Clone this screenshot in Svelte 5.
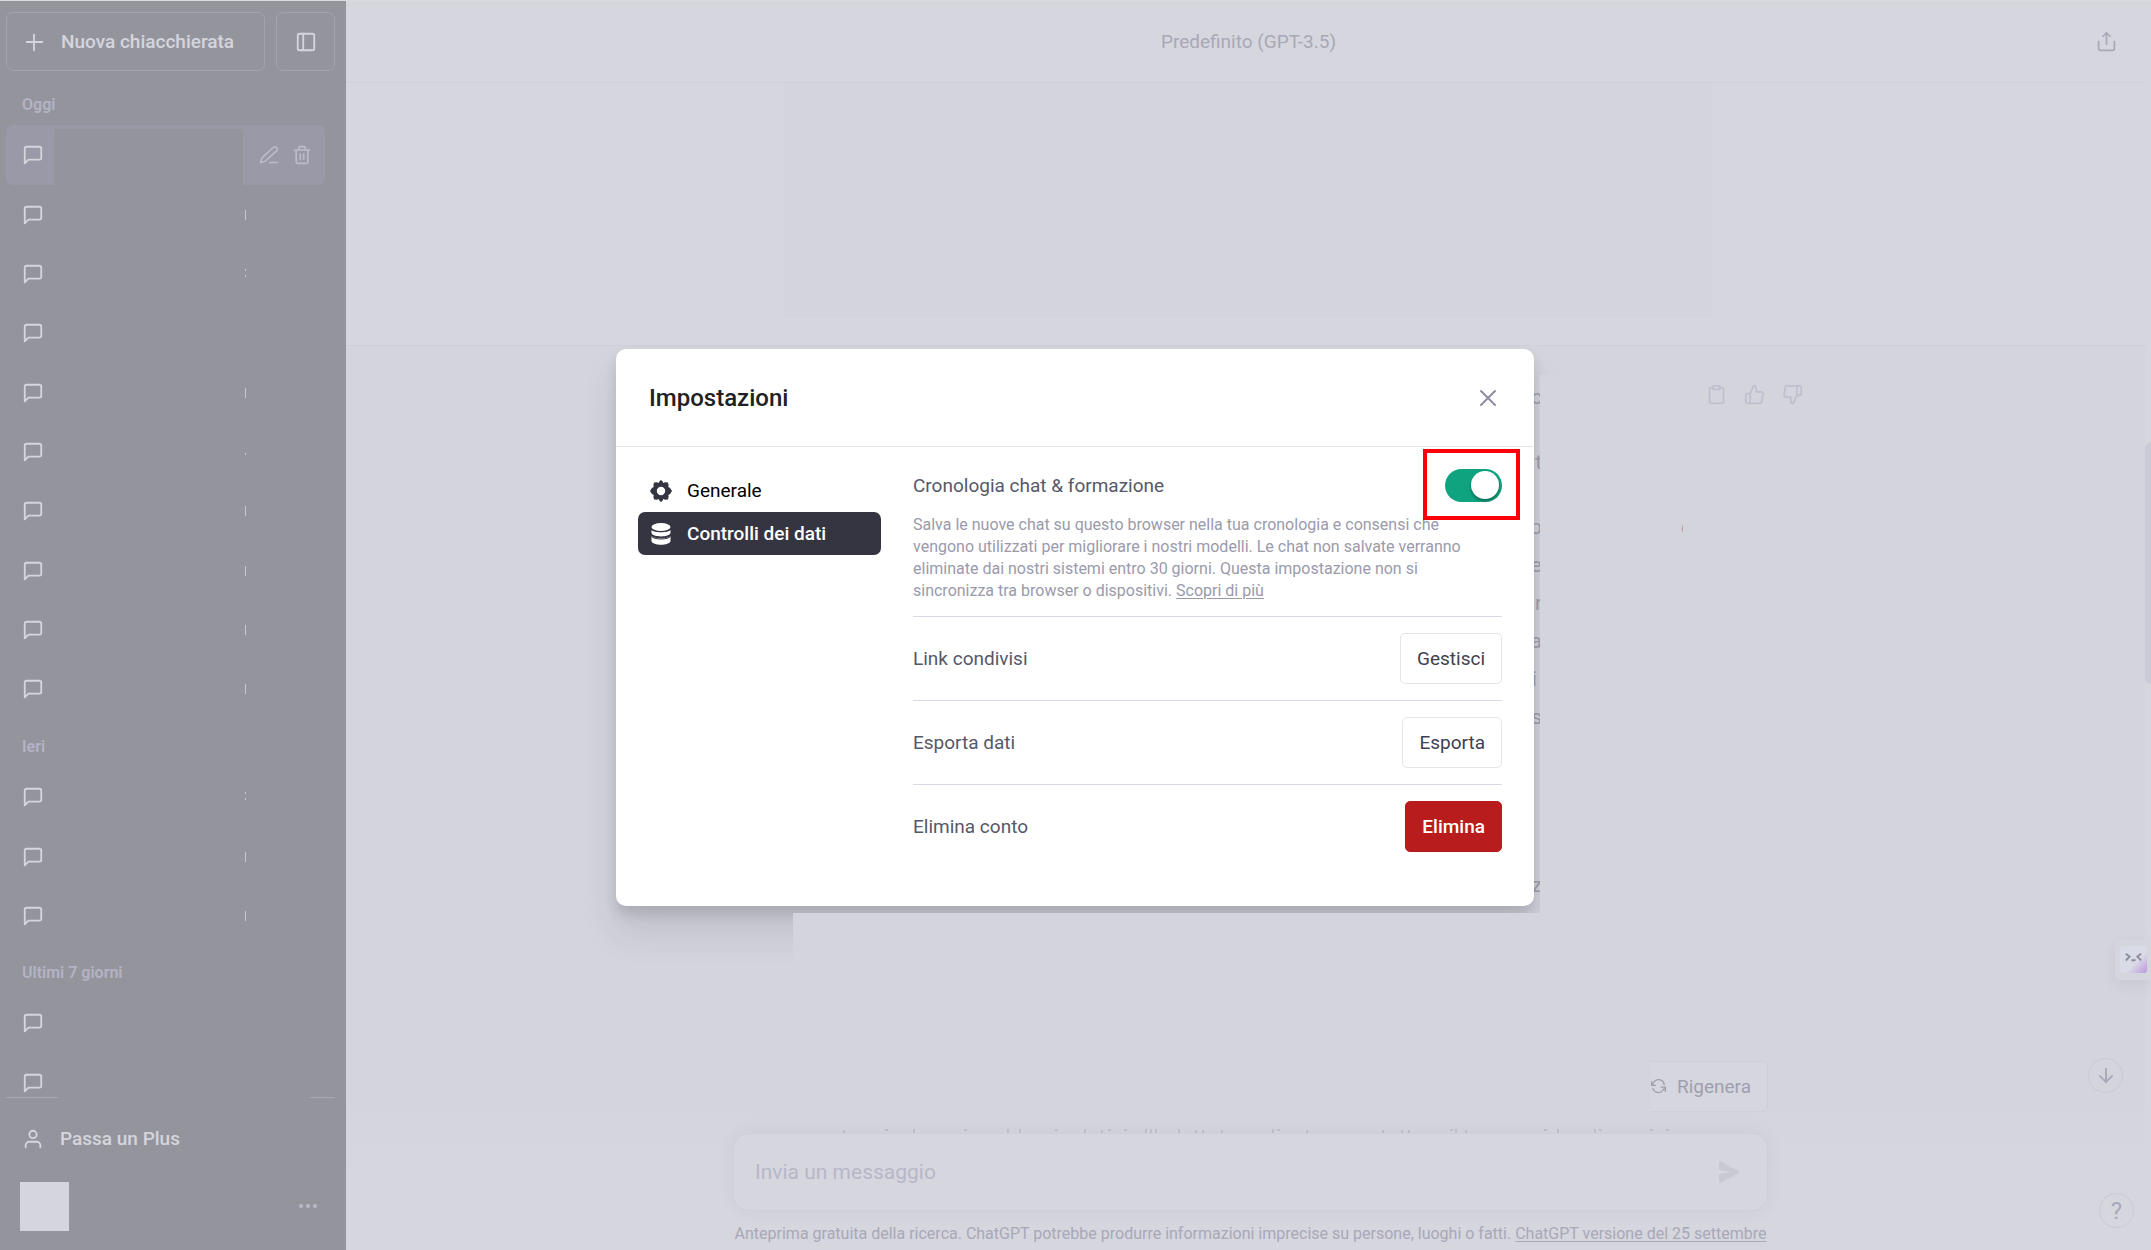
<script lang="ts">
  interface ChatGroup {
    label: string;
    // what is left visible of each title: nothing, a stem or a few dots
    chats: string[];
  }

  const groups: ChatGroup[] = [
    {
      label: 'Oggi',
      chats: ['none', 'stem', 'dots', 'none', 'stem', 'dot', 'stem', 'stem', 'stem', 'stem'],
    },
    { label: 'Ieri', chats: ['dots', 'stem', 'stem'] },
    { label: 'Ultimi 7 giorni', chats: ['none', 'none'] },
  ];

  const paragraphs = [['c'], ['at'], ['p', 'e', 'r', 'ia', 'i ', 's'], ['', ''], ['z']];

  // tops of the letters that show above the message box
  const stems = [180, 274, 286, 351, 412, 417, 422, 445, 539, 722, 824, 861];
  const dots = [152, 231, 322, 375, 391, 544, 717, 811, 866, 917, 933];
  const bars = [110, 368, 462, 469, 488, 573, 649, 668, 675, 732];

  let training = $state(true);
  let message = $state('');
</script>

{#snippet bubble()}
  <svg class="icon" viewBox="0 0 24 24" aria-hidden="true">
    <path d="M21 15a2 2 0 0 1-2 2H7l-4 4V5a2 2 0 0 1 2-2h14a2 2 0 0 1 2 2z" />
  </svg>
{/snippet}

<div class="app">
  <aside class="sidebar">
    <div class="top-buttons">
      <button class="new-chat">
        <svg class="icon" viewBox="0 0 24 24" aria-hidden="true"><path d="M12 4v17M4 12h17" /></svg>
        Nuova chiacchierata
      </button>
      <button class="collapse" aria-label="Nascondi barra laterale">
        <svg class="icon" viewBox="0 0 24 24" aria-hidden="true">
          <rect x="3" y="3" width="18" height="18" rx="2" /><path d="M9 3v18" />
        </svg>
      </button>
    </div>

    <nav class="history" aria-label="Cronologia chat">
      {#each groups as group, g}
        <h3>{group.label}</h3>
        <ul>
          {#each group.chats as cut, i}
            <li class:active={g === 0 && i === 0}>
              {@render bubble()}
              <span class="title"></span>
              <span class="cut {cut}"></span>
              {#if g === 0 && i === 0}
                <button class="tool" aria-label="Rinomina">
                  <svg class="icon" viewBox="0 0 24 24" aria-hidden="true">
                    <path d="M13 21h9M17 3a2.800 2.800 0 0 1 4 4L7.500 19.500 2 21l1.500-5.500z" />
                  </svg>
                </button>
                <button class="tool" aria-label="Elimina chat">
                  <svg class="icon" viewBox="0 0 24 24" aria-hidden="true">
                    <path d="M3 6h18M19 6v14a2 2 0 0 1-2 2H7a2 2 0 0 1-2-2V6M8 6V4a2 2 0 0 1 2-2h4a2 2 0 0 1 2 2v2M10 11v6M14 11v6" />
                  </svg>
                </button>
              {/if}
            </li>
          {/each}
        </ul>
      {/each}
    </nav>

    <div class="account">
      <div class="rule"><span></span><span></span></div>
      <button class="upgrade">
        <svg class="icon" viewBox="0 0 24 24" aria-hidden="true">
          <circle cx="12" cy="7" r="4" /><path d="M20 21v-2a4 4 0 0 0-4-4H8a4 4 0 0 0-4 4v2" />
        </svg>
        Passa un Plus
      </button>
      <button class="profile" aria-label="Profilo">
        <span class="avatar"></span>
        <svg class="more" viewBox="0 0 18 4" aria-hidden="true">
          <circle cx="2" cy="2" r="2" /><circle cx="9" cy="2" r="2" /><circle cx="16" cy="2" r="2" />
        </svg>
      </button>
    </div>
  </aside>

  <main>
    <header class="chat-header">
      <span>Predefinito (GPT-3.5)</span>
      <button class="share" aria-label="Condividi">
        <svg class="icon" viewBox="0 0 24 24" aria-hidden="true">
          <path d="M12 15V2M8 6l4-4 4 4M3 12v8a2 2 0 0 0 2 2h14a2 2 0 0 0 2-2v-8" />
        </svg>
      </button>
    </header>

    <section class="conversation">
      <article class="question"><div class="hidden-text"></div></article>
      <article class="answer">
        <div class="answer-inner">
          <div class="answer-text">
            {#each paragraphs as lines}
              <p>
                {#each lines as line}<span>{line}</span>{/each}
              </p>
            {/each}
          </div>
          <span class="stray">e</span>
          <div class="actions">
            <button aria-label="Copia">
              <svg class="icon" viewBox="0 0 24 24" aria-hidden="true">
                <path d="M16 4h2a2 2 0 0 1 2 2v14a2 2 0 0 1-2 2H6a2 2 0 0 1-2-2V6a2 2 0 0 1 2-2h2" />
                <rect x="8" y="2" width="8" height="4" rx="1" />
              </svg>
            </button>
            <button aria-label="Buona risposta">
              <svg class="icon" viewBox="0 0 24 24" aria-hidden="true">
                <path d="M14 9V5a3 3 0 0 0-3-3l-4 9v11h11.280a2 2 0 0 0 2-1.700l1.380-9a2 2 0 0 0-2-2.300zM7 22H4a2 2 0 0 1-2-2v-7a2 2 0 0 1 2-2h3" />
              </svg>
            </button>
            <button aria-label="Risposta non valida">
              <svg class="icon" viewBox="0 0 24 24" aria-hidden="true">
                <path d="M10 15v4a3 3 0 0 0 3 3l4-9V2H5.720a2 2 0 0 0-2 1.700l-1.380 9a2 2 0 0 0 2 2.300zM17 2h2.670A2.310 2.310 0 0 1 22 4v7a2.310 2.310 0 0 1-2.330 2H17" />
              </svg>
            </button>
          </div>
        </div>
      </article>
    </section>

    <footer class="composer">
      <div class="regenerate">
        <button>
          <svg class="icon" viewBox="0 0 24 24" aria-hidden="true">
            <path d="M23 20v-7h-7M1 4v6h6M21 9A9 9 0 0 0 4 6l-3 4M23 13l-4 5A9 9 0 0 1 3 15" />
          </svg>
          Rigenera
        </button>
      </div>
      <svg class="letter-tops" viewBox="0 0 1035 4" preserveAspectRatio="xMinYMin" aria-hidden="true">
        {#each stems as x}<rect {x} y="0" width="2" height="4" />{/each}
        {#each dots as x}<rect {x} y="0" width="3" height="2" />{/each}
        {#each bars as x}<rect {x} y="1" width="2" height="3" />{/each}
      </svg>
      <form onsubmit={(e) => e.preventDefault()}>
        <input aria-label="Messaggio" placeholder="Invia un messaggio" bind:value={message} />
        <button class="send" aria-label="Invia">
          <svg viewBox="0 0 20 22" aria-hidden="true">
            <path d="M0 1.500C0 .4 1 0 2 .4l17 9.300c1.300.700 1.300 2 0 2.700L2 21.600c-1 .5-2 0-2-1.100v-6.300c0-.7.4-1.200 1.100-1.300L11 11 1.100 9.100C.4 9 0 8.500 0 7.800z" />
          </svg>
        </button>
      </form>
      <p class="note">
        Anteprima gratuita della ricerca. ChatGPT potrebbe produrre informazioni imprecise su persone, luoghi o fatti.
        <a href="#notes">ChatGPT versione del 25 settembre</a>
      </p>
    </footer>

    <button class="round scroll-down" aria-label="Vai in fondo">
      <svg class="icon" viewBox="0 0 24 24" aria-hidden="true"><path d="M12 2v20M3 13l9 9 9-9" /></svg>
    </button>
    <button class="round help">?</button>
    <div class="scroll-thumb"></div>
    <div class="extension">
      <svg viewBox="0 0 28 28" aria-hidden="true">
        <defs>
          <linearGradient id="tile" x1="0" y1="0" x2="1" y2="1">
            <stop offset="0.6" stop-color="#d9dbe6" />
            <stop offset="1" stop-color="#bd96dd" />
          </linearGradient>
        </defs>
        <rect width="28" height="28" rx="3" fill="url(#tile)" />
        <path d="M6 8l4 3-4 4M22 8l-4 3 4 4M12 14q2 2 4 0" fill="none" stroke="#8f8f9e" stroke-width="2" />
      </svg>
    </div>
  </main>

  <div class="overlay">
    <div class="modal-wrap">
      <div class="modal" role="dialog" aria-modal="true" aria-labelledby="settings-title">
        <div class="modal-header">
          <h2 id="settings-title">Impostazioni</h2>
          <button class="close" aria-label="Chiudi">
            <svg class="icon" viewBox="0 0 24 24" aria-hidden="true"><path d="M5 5l14 14M19 5L5 19" /></svg>
          </button>
        </div>
        <div class="modal-body">
          <div class="tabs" role="tablist">
            <button role="tab" aria-selected="false">
              <svg viewBox="0 0 22 22" aria-hidden="true">
                <path
                  fill-rule="evenodd"
                  d="M9.500 1.200 11 0l1.500 1.200.8 1.700 1.800-.7 2.900.2.600 2.800-.3 1.700 1.800 1L22 11l-1.900 3.100-1.800 1 .3 1.700-.6 2.800-2.900.2-1.800-.7-.8 1.700L11 22l-1.500-1.200-.8-1.700-1.800.7-2.900-.2-.6-2.800.3-1.700-1.800-1L0 11l1.900-3.100 1.800-1-.3-1.700.6-2.800 2.900-.2 1.800.7zM11 6.800a4.200 4.200 0 1 0 0 8.400 4.200 4.200 0 0 0 0-8.400z"
                />
              </svg>
              Generale
            </button>
            <button class="selected" role="tab" aria-selected="true">
              <svg viewBox="0 0 22 22" aria-hidden="true">
                <ellipse cx="11" cy="4" rx="9.500" ry="4" />
                <path d="M1.500 7c2 3 17 3 19 0v3c-1 4.500-18 4.500-19 0zM1.500 13c2 3 17 3 19 0v5c-1 5-18 5-19 0z" />
                <path class="gap" d="M1.500 13.300c2 3.600 17 3.600 19 0" />
              </svg>
              Controlli dei dati
            </button>
          </div>

          <div class="panel">
            <div class="training">
              <div class="training-row">
                <label for="training">Cronologia chat &amp; formazione</label>
                <span class="switch">
                  <input id="training" type="checkbox" role="switch" bind:checked={training} />
                  <span class="highlight"></span>
                </span>
              </div>
              <p>
                Salva le nuove chat su questo browser nella tua cronologia e consensi che vengono utilizzati per
                migliorare i nostri modelli. Le chat non salvate verranno eliminate dai nostri sistemi entro 30
                giorni. Questa impostazione non si sincronizza tra browser o dispositivi.
                <a href="#more">Scopri di più</a>
              </p>
            </div>
            <div class="setting">
              <span>Link condivisi</span>
              <button>Gestisci</button>
            </div>
            <div class="setting">
              <span>Esporta dati</span>
              <button>Esporta</button>
            </div>
            <div class="setting">
              <span>Elimina conto</span>
              <button class="danger">Elimina</button>
            </div>
          </div>
        </div>
      </div>
      <div class="cover cover-right"></div>
      <div class="cover cover-bottom"></div>
    </div>
  </div>
</div>

<style>
  :global(body) {
    margin: 0;
  }

  .app {
    position: relative;
    display: flex;
    height: 100vh;
    box-sizing: border-box;
    border-top: 1px solid #dadadd;
    overflow: hidden;
    background: #d6d6df;
    font-family: Roboto, 'Liberation Sans', sans-serif;
    font-size: 19px;
    line-height: 32px;
    color: #565869;
  }

  button {
    display: flex;
    align-items: center;
    padding: 0;
    border: none;
    background: none;
    font: inherit;
    color: inherit;
    cursor: pointer;
  }

  h2,
  h3,
  p,
  ul {
    margin: 0;
    padding: 0;
  }

  .icon {
    flex: none;
    width: 21px;
    height: 21px;
    fill: none;
    stroke: currentColor;
    stroke-width: 2;
    stroke-linecap: round;
    stroke-linejoin: round;
  }

  /* sidebar */
  .sidebar {
    display: flex;
    flex-direction: column;
    flex: none;
    width: 346px;
    box-sizing: border-box;
    padding: 11px 11px 0 6px;
    background: #94949d;
    color: #d5d5de;
  }

  .sidebar .icon {
    width: 22px;
    height: 22px;
  }

  .top-buttons {
    display: flex;
    gap: 11px;
  }

  .new-chat,
  .collapse {
    height: 59px;
    box-sizing: border-box;
    border: 1px solid #a3a3ad;
    border-radius: 7px;
  }

  .new-chat {
    flex: 1;
    gap: 16px;
    padding-left: 16px;
    font-weight: 500;
  }

  .collapse {
    width: 59px;
    justify-content: center;
  }

  .history {
    flex: 1;
    min-height: 0;
    overflow: hidden;
    padding-top: 6px;
  }

  .history h3 {
    padding: 8px 16px 0;
    font-size: 16px;
    font-weight: 600;
    line-height: 40px;
    color: #b3b3c5;
  }

  .history ul {
    list-style: none;
  }

  .history li {
    display: flex;
    align-items: center;
    height: 59px;
    margin-right: 10px;
    padding-left: 16px;
    border-radius: 7px;
  }

  .history li:nth-child(3n + 1) {
    height: 60px;
  }

  .history .active {
    background: #9999a7;
  }

  .title {
    align-self: flex-end;
    width: 191px;
    height: 56px;
    margin-left: 10px;
    background: #94949d;
  }

  .cut {
    width: 1px;
    height: 10px;
    margin-right: 15px;
  }

  .stem {
    background: #c8c8d2;
  }

  .dots {
    background: repeating-linear-gradient(#c8c8d2 0 2px, transparent 2px 6px);
  }

  .dot {
    background: linear-gradient(transparent 6px, #c8c8d2 6px 8px, transparent 8px);
  }

  .tool {
    margin-right: 13px;
    color: #bcbcc9;
  }

  .tool .icon {
    width: 20px;
    height: 20px;
  }

  .rule {
    display: flex;
    justify-content: space-between;
  }

  .rule span {
    width: 25px;
    height: 1px;
    background: #a8a8b1;
  }

  .rule span:first-child {
    width: 52px;
  }

  .upgrade {
    gap: 16px;
    width: 100%;
    height: 82px;
    padding-left: 16px;
    font-weight: 500;
  }

  .profile {
    justify-content: space-between;
    width: 100%;
    height: 72px;
    padding: 0 18px 0 14px;
    margin-top: -10px;
    margin-bottom: 8px;
  }

  .avatar {
    width: 49px;
    height: 49px;
    background: #d5d5de;
  }

  .more {
    width: 18px;
    height: 4px;
    fill: #b9b9c8;
  }

  /* chat */
  main {
    position: relative;
    display: flex;
    flex-direction: column;
    flex: 1;
    min-width: 0;
  }

  .chat-header {
    position: relative;
    display: flex;
    align-items: center;
    justify-content: center;
    flex: none;
    height: 81px;
    margin-right: 6px;
    padding-left: 6px;
    border-bottom: 1px solid #cfcfd9;
    color: #a8a8b6;
  }

  .share {
    position: absolute;
    right: 28px;
  }

  .conversation {
    display: flex;
    flex-direction: column;
    flex: 1;
    min-height: 0;
    overflow: hidden;
    margin-right: 6px;
  }

  .question {
    padding: 0 0 27px 4px;
    border-bottom: 1px solid #cecfd8;
  }

  .hidden-text {
    width: 928px;
    height: 235px;
    margin: 0 auto;
    background: #d4d4dd;
  }

  .answer {
    flex: 1;
    background: #d4d4dd;
  }

  .answer-inner {
    display: flex;
    width: 1106px;
    margin: 0 auto;
    padding: 32px 1px 0 10px;
    color: #9f9fad;
  }

  .answer-text {
    width: 843px;
    overflow: hidden;
    font-size: 21px;
    line-height: 38px;
    text-align: right;
  }

  .answer-text p {
    margin: 0 -2px 27px 0;
  }

  .answer-text span {
    display: block;
    min-height: 38px;
    white-space: pre;
  }

  .stray {
    width: 2px;
    margin-left: 141px;
    margin-top: 130px;
    overflow: hidden;
    font-size: 21px;
    line-height: 38px;
    height: 38px;
  }

  .actions {
    display: flex;
    align-items: flex-start;
    gap: 17px;
    margin-left: auto;
    padding-top: 6px;
    color: #bfbfce;
  }

  .composer {
    display: flex;
    flex-direction: column;
    align-items: center;
    flex: none;
    padding-left: 10px;
    margin-right: 6px;
    background: linear-gradient(#d4d4dd 40px, #d6d6df 100px);
  }

  .regenerate {
    display: flex;
    justify-content: flex-end;
    width: 100%;
    max-width: 1035px;
  }

  .regenerate button {
    gap: 11px;
    height: 51px;
    box-sizing: border-box;
    padding-right: 16px;
    border: 1px solid #cfcfd9;
    border-left: none;
    border-radius: 0 5px 5px 0;
    background: #d6d6df;
    color: #9f9fac;
  }

  .regenerate .icon {
    width: 15px;
    height: 15px;
  }

  .letter-tops {
    width: 1035px;
    height: 4px;
    margin-top: 17px;
    fill: #c0c0cb;
  }

  form {
    display: flex;
    align-items: center;
    width: 100%;
    max-width: 1035px;
    height: 78px;
    box-sizing: border-box;
    padding: 0 28px 0 21px;
    border: 1px solid #cecfd8;
    border-radius: 16px;
    background: #d6d6df;
    box-shadow: 0 0 20px rgba(60, 60, 90, 0.05);
  }

  form input {
    flex: 1;
    padding: 0;
    border: none;
    outline: none;
    background: none;
    font: inherit;
    font-size: 21px;
    color: #8e8ea0;
  }

  form input::placeholder {
    color: #b7b7c7;
    opacity: 1;
  }

  .send svg {
    width: 20px;
    height: 22px;
    fill: #c9c9d4;
  }

  .note {
    padding: 12px 0 5px;
    font-size: 16px;
    line-height: 22px;
    color: #a8a8b7;
  }

  .note a,
  .training a {
    color: inherit;
    text-underline-offset: 2px;
  }

  .round {
    position: absolute;
    justify-content: center;
    width: 35px;
    height: 35px;
    box-sizing: border-box;
    border: 1px solid #cacad5;
    border-radius: 50%;
    color: #a9a9b9;
  }

  .scroll-down {
    right: 28px;
    bottom: 157px;
  }

  .scroll-down .icon {
    width: 16px;
    height: 17px;
    stroke-width: 3;
  }

  .help {
    right: 17px;
    bottom: 22px;
    font-size: 24px;
  }

  .scroll-thumb {
    position: absolute;
    top: 441px;
    right: 0;
    width: 6px;
    height: 242px;
    border-radius: 6px 0 0 6px;
    background: #cbcbd7;
  }

  .extension {
    position: absolute;
    right: 0;
    bottom: 270px;
    padding: 6px 4px 7px 5px;
    border-radius: 5px 0 0 5px;
    background: #d5d5de;
    box-shadow: 0 5px 14px rgba(60, 60, 90, 0.07);
  }

  .extension svg {
    display: block;
    width: 27px;
    height: 27px;
  }

  /* settings dialog */
  .overlay {
    position: absolute;
    inset: 0;
    display: flex;
    align-items: center;
    justify-content: center;
    padding: 4px 1px 0 0;
  }

  .modal-wrap {
    position: relative;
    width: 100%;
    max-width: 918px;
  }

  .modal {
    border-radius: 10px;
    background: #fff;
    box-shadow:
      0 26px 36px rgba(40, 40, 55, 0.12),
      0 8px 12px rgba(40, 40, 55, 0.14);
  }

  .modal-header {
    display: flex;
    align-items: center;
    justify-content: space-between;
    height: 97px;
    padding: 0 34px 0 33px;
    border-bottom: 1px solid #e3e3e6;
  }

  .modal-header h2 {
    font-size: 24px;
    font-weight: 500;
    color: #202123;
  }

  .close {
    color: #8e8ea0;
  }

  .close .icon {
    width: 24px;
    height: 24px;
  }

  .modal-body {
    display: flex;
    gap: 32px;
    padding: 22px 32px 38px 22px;
  }

  .tabs {
    flex: none;
    width: 243px;
  }

  .tabs button {
    gap: 15px;
    width: 100%;
    height: 43px;
    padding-left: 12px;
    border-radius: 7px;
    color: #000;
  }

  .tabs svg {
    width: 22px;
    height: 22px;
    fill: #343541;
  }

  .tabs .selected {
    background: #343541;
    font-weight: 500;
    color: #fff;
  }

  .tabs .selected svg {
    fill: #fff;
  }

  .tabs .gap {
    fill: none;
    stroke: #343541;
    stroke-width: 1;
  }

  .panel {
    flex: 1;
    min-width: 0;
  }

  .training {
    padding-bottom: 14px;
  }

  .training-row {
    display: flex;
    align-items: center;
    justify-content: space-between;
    height: 33px;
  }

  .training p {
    max-width: 560px;
    margin-top: 12px;
    font-size: 16px;
    line-height: 22px;
    color: #9a9aab;
  }

  .switch {
    position: relative;
    display: flex;
  }

  .switch input {
    width: 57px;
    height: 33px;
    margin: 0;
    padding: 2px;
    box-sizing: border-box;
    appearance: none;
    border-radius: 17px;
    background: #d9d9e3;
    cursor: pointer;
  }

  .switch input::before {
    content: '';
    display: block;
    width: 28px;
    height: 28px;
    border-radius: 50%;
    background: #fff;
    box-shadow: 0 2px 3px rgba(0, 0, 0, 0.35);
  }

  .switch input:checked {
    background: #10a37f;
  }

  .switch input:checked::before {
    margin-left: 24px;
  }

  .highlight {
    position: absolute;
    inset: -20px -18px -18px -22px;
    border: 4px solid #fb0007;
    pointer-events: none;
  }

  .setting {
    display: flex;
    align-items: center;
    justify-content: space-between;
    padding: 16px 0;
    border-top: 1px solid #d9d9e3;
  }

  .setting button {
    height: 51px;
    box-sizing: border-box;
    padding: 0 16px;
    border: 1px solid #e5e5e8;
    border-radius: 5px;
    color: #40414f;
  }

  .setting .danger {
    border-color: #b91c1c;
    background: #b91c1c;
    font-weight: 500;
    color: #fff;
  }

  .cover {
    position: absolute;
    background: #d4d4dd;
  }

  .cover-right {
    top: 26px;
    bottom: -67px;
    left: calc(100% + 6px);
    width: 60px;
  }

  .cover-bottom {
    top: calc(100% + 7px);
    right: -6px;
    left: 177px;
    height: 60px;
  }
</style>
